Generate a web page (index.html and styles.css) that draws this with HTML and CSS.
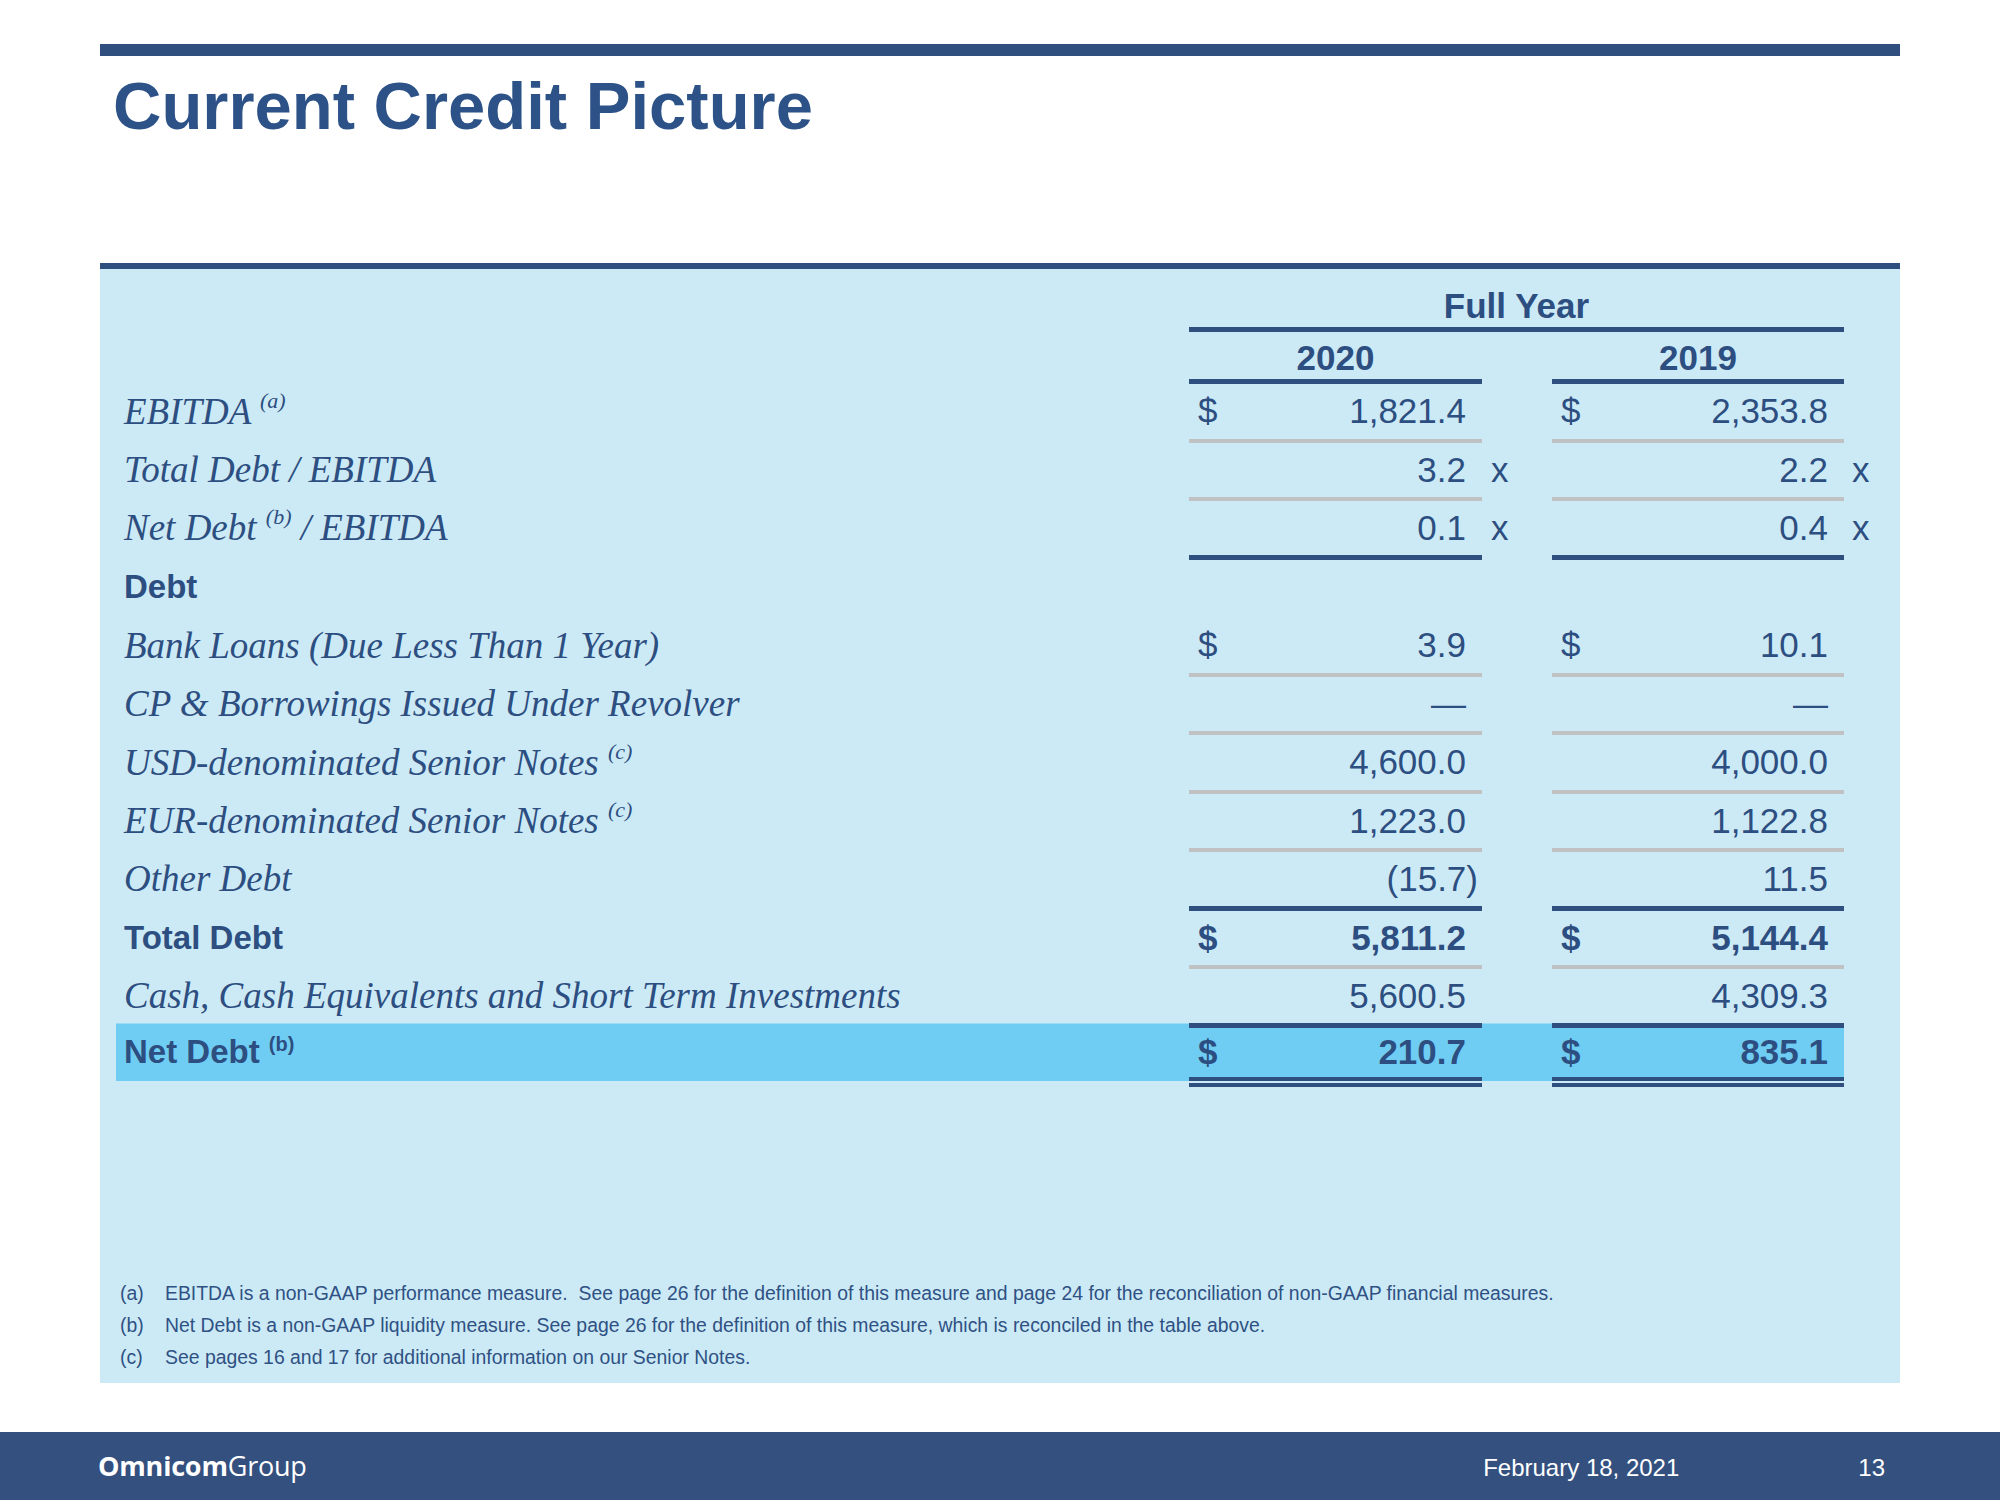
FILE: index.html
```html
<!DOCTYPE html>
<html lang="en">
<head>
<meta charset="utf-8">
<title>Current Credit Picture</title>
<link rel="stylesheet" href="styles.css">
</head>
<body>
<div class="page">
  <div class="topbar"></div>
  <h1 class="title">Current Credit Picture</h1>

  <section class="panel">
    <div class="table">
      <div class="row head1"><div class="fy">Full Year</div></div>
      <div class="row head2"><div></div><div class="yr">2020</div><div></div><div class="yr">2019</div></div>

      <div class="row g">
        <div class="lbl it"><span>EBITDA <sup class="sup-it">(a)</sup></span></div>
        <div class="val"><span>$</span><span class="num">1,821.4</span></div>
        <div class="sfx"></div>
        <div class="val"><span>$</span><span class="num">2,353.8</span></div>
        <div class="sfx"></div>
      </div>
      <div class="row g">
        <div class="lbl it"><span>Total Debt / EBITDA</span></div>
        <div class="val"><span class="num">3.2</span></div>
        <div class="sfx">x</div>
        <div class="val"><span class="num">2.2</span></div>
        <div class="sfx s2">x</div>
      </div>
      <div class="row d">
        <div class="lbl it"><span>Net Debt <sup class="sup-it">(b)</sup> / EBITDA</span></div>
        <div class="val"><span class="num">0.1</span></div>
        <div class="sfx">x</div>
        <div class="val"><span class="num">0.4</span></div>
        <div class="sfx s2">x</div>
      </div>
      <div class="row n">
        <div class="lbl bold"><span>Debt</span></div>
        <div class="val"></div>
        <div class="sfx"></div>
        <div class="val"></div>
        <div class="sfx"></div>
      </div>
      <div class="row g">
        <div class="lbl it"><span>Bank Loans (Due Less Than 1 Year)</span></div>
        <div class="val"><span>$</span><span class="num">3.9</span></div>
        <div class="sfx"></div>
        <div class="val"><span>$</span><span class="num">10.1</span></div>
        <div class="sfx"></div>
      </div>
      <div class="row g">
        <div class="lbl it"><span>CP &amp; Borrowings Issued Under Revolver</span></div>
        <div class="val"><span class="num">&mdash;</span></div>
        <div class="sfx"></div>
        <div class="val"><span class="num">&mdash;</span></div>
        <div class="sfx"></div>
      </div>
      <div class="row g">
        <div class="lbl it"><span>USD-denominated Senior Notes <sup class="sup-it">(c)</sup></span></div>
        <div class="val"><span class="num">4,600.0</span></div>
        <div class="sfx"></div>
        <div class="val"><span class="num">4,000.0</span></div>
        <div class="sfx"></div>
      </div>
      <div class="row g">
        <div class="lbl it"><span>EUR-denominated Senior Notes <sup class="sup-it">(c)</sup></span></div>
        <div class="val"><span class="num">1,223.0</span></div>
        <div class="sfx"></div>
        <div class="val"><span class="num">1,122.8</span></div>
        <div class="sfx"></div>
      </div>
      <div class="row d">
        <div class="lbl it"><span>Other Debt</span></div>
        <div class="val"><span class="num">(15.7<span class="hang">)</span></span></div>
        <div class="sfx"></div>
        <div class="val"><span class="num">11.5</span></div>
        <div class="sfx"></div>
      </div>
      <div class="row g">
        <div class="lbl bold"><span>Total Debt</span></div>
        <div class="val strong"><span>$</span><span class="num">5,811.2</span></div>
        <div class="sfx"></div>
        <div class="val strong"><span>$</span><span class="num">5,144.4</span></div>
        <div class="sfx"></div>
      </div>
      <div class="row d">
        <div class="lbl it"><span>Cash, Cash Equivalents and Short Term Investments</span></div>
        <div class="val"><span class="num">5,600.5</span></div>
        <div class="sfx"></div>
        <div class="val"><span class="num">4,309.3</span></div>
        <div class="sfx"></div>
      </div>
      <div class="row net">
        <div class="lbl bold hl hl-up"><span>Net Debt <sup class="sup-b">(b)</sup></span></div>
        <div class="val double strong hl"><span>$</span><span class="num">210.7</span></div>
        <div class="sfx hl hl-up"></div>
        <div class="val double strong hl"><span>$</span><span class="num">835.1</span></div>
        <div class="sfx last"></div>
      </div>
    </div>

    <div class="notes">
      <div class="note"><span class="mark">(a)</span><span>EBITDA is a non-GAAP performance measure.&nbsp; See page 26 for the definition of this measure and page 24 for the reconciliation of non-GAAP financial measures.</span></div>
      <div class="note"><span class="mark">(b)</span><span>Net Debt is a non-GAAP liquidity measure. See page 26 for the definition of this measure, which is reconciled in the table above.</span></div>
      <div class="note"><span class="mark">(c)</span><span>See pages 16 and 17 for additional information on our Senior Notes.</span></div>
    </div>
  </section>

  <footer class="footer">
    <div class="logo"><span class="logo-b">Omnicom</span><span class="logo-r">Group</span></div>
    <div class="date">February 18, 2021</div>
    <div class="pageno">13</div>
  </footer>
</div>
</body>
</html>
```

FILE: styles.css
```css
* { box-sizing: border-box; }

html, body {
  margin: 0;
  padding: 0;
  background: #ffffff;
}

.page {
  width: 2000px;
  height: 1500px;
  overflow: hidden;
  font-family: "Liberation Sans", Arial, sans-serif;
  color: #2d4e80;
}

.topbar {
  margin: 44px 0 0 100px;
  width: 1800px;
  height: 12px;
  background: #2f4f7e;
}

.title {
  margin: 16px 0 0 113px;
  font-family: "Liberation Sans", Arial, sans-serif;
  font-weight: bold;
  font-size: 67px;
  line-height: 67px;
  height: 67px;
  color: #2c5287;
}

.panel {
  margin: 124px 0 0 100px;
  width: 1800px;
  height: 1120px;
  border-top: 6px solid #2f4f7e;
  background: #cceaf6;
  display: flex;
  flex-direction: column;
}

.table {
  margin-left: 16px;
  width: 1784px;
}

.row {
  display: grid;
  grid-template-columns: 1073px 293px 70px 292px 1fr;
  height: 58.5px;
}

.row > div {
  display: flex;
  align-items: center;
  font-size: 35px;
  border-bottom: 4px solid transparent;
}

.row.d > div { border-bottom-width: 5px; }
.row.g > .val { border-bottom-color: #bfc1c3; }
.row.d > .val { border-bottom-color: #2f4f7e; }

.head1 { height: 63px; }
.head1 .fy {
  grid-column: 2 / 5;
  display: block;
  text-align: center;
  padding-top: 16px;
  line-height: 42px;
  height: 63px;
  border-bottom: 5px solid #2f4f7e;
  font-weight: bold;
  font-size: 35px;
}

.head2 { height: 52px; }
.head2 > div { border-bottom: 0; }
.head2 .yr {
  display: block;
  text-align: center;
  padding-top: 4px;
  line-height: 43px;
  height: 52px;
  border-bottom: 5px solid #2f4f7e;
  font-weight: bold;
  font-size: 35px;
}

.lbl {
  padding-left: 8px;
  white-space: nowrap;
}

.lbl.it {
  font-family: "Liberation Serif", "Times New Roman", serif;
  font-style: italic;
  font-size: 37px;
}

.lbl.bold {
  font-weight: bold;
  font-size: 33px;
}

.sup-it {
  font-size: 22px;
  line-height: 0;
  vertical-align: 16px;
}

.sup-b {
  font-size: 20px;
  font-weight: bold;
  line-height: 0;
  vertical-align: 12px;
}

.val {
  justify-content: space-between;
  padding: 0 16px 0 9px;
}

.val .num {
  margin-left: auto;
  white-space: nowrap;
}

.hang {
  margin-right: -12px;
}

.val.strong { font-weight: bold; }

.sfx {
  padding-left: 9px;
}
.sfx.s2 { padding-left: 8px; }

.row.net { height: 53.5px; }

.row.net > div { border-bottom-color: transparent; }
.row.net > .hl { border-bottom-color: #6fcdf4; }

.hl { background: #6fcdf4; }
.hl-up { box-shadow: 0 -4.5px 0 #6fcdf4; }

.row.net > .val.double {
  border-bottom: 4px solid #2f4f7e;
  box-shadow: 0 2px 0 #cceaf6, 0 6px 0 #2f4f7e;
}

.notes {
  margin-top: auto;
  padding: 0 0 10px 20px;
  font-size: 19.4px;
  line-height: 32px;
  color: #2f5183;
}

.note {
  display: grid;
  grid-template-columns: 45px 1fr;
  white-space: nowrap;
}

.footer {
  margin-top: 49px;
  height: 68px;
  background: #33507f;
  color: #ffffff;
  display: flex;
  align-items: baseline;
  padding: 18.5px 115px 0 98px;
}

.logo {
  font-family: "Open Sans", "Noto Sans", sans-serif;
  font-size: 27px;
  line-height: 30px;
  letter-spacing: -0.2px;
}
.logo-b { font-weight: 700; }
.logo-r { font-weight: 400; }

.date {
  margin-left: auto;
  font-size: 24px;
  line-height: 30px;
}

.pageno {
  margin-left: 179px;
  font-size: 24px;
  line-height: 30px;
}
```
